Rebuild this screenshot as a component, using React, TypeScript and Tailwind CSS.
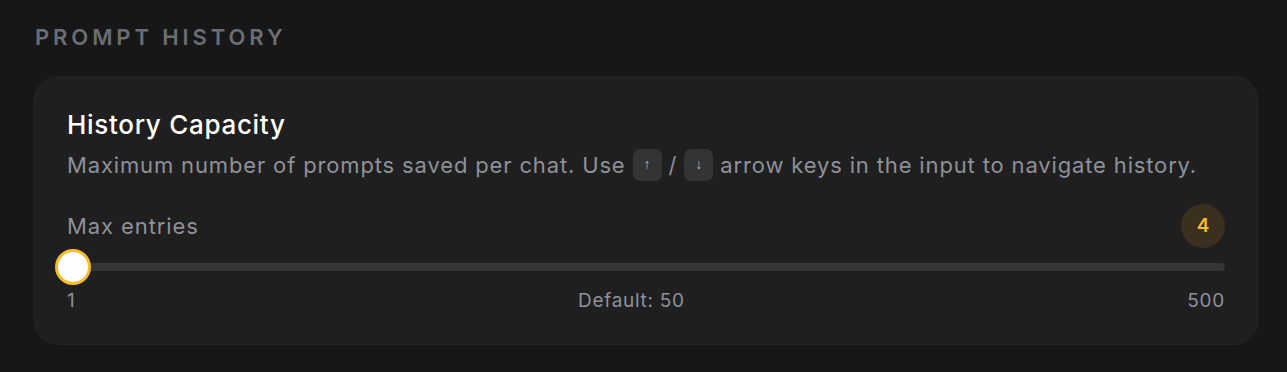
export default function App() {
  const value = 4;
  const min = 1;
  const max = 500;
  const pct = ((value - min) / (max - min)) * 100;

  return (
    <div
      className="min-h-[372px] w-full bg-[#171717] pl-[34px] pr-[29px] pt-[23px]"
      style={{ fontFamily: "Inter, 'Noto Sans', sans-serif" }}
    >
      <h2 className="text-[22px] font-semibold tracking-[3.9px] text-[#6b6d74] leading-[28px] pl-px">
        PROMPT HISTORY
      </h2>

      <div className="mt-[25px] rounded-[24px] bg-[#1f1f1f] border border-[#242424] px-[32px] pt-[32px] pb-[31px]">
        <div className="text-[26px] font-medium text-white leading-[32px] tracking-[0.7px]">
          History Capacity
        </div>
        <div className="mt-[8px] flex items-center text-[22px] text-[#8e919a] leading-[32px] tracking-[0.85px]">
          <span>Maximum number of prompts saved per chat. Use</span>
          <kbd className="mx-[7px] inline-flex h-[32px] w-[29px] items-center justify-center rounded-[7px] bg-[#343434] text-[14px] text-[#b7b9bf] tracking-normal">
            ↑
          </kbd>
          <span>/</span>
          <kbd className="mx-[7px] inline-flex h-[32px] w-[29px] items-center justify-center rounded-[7px] bg-[#343434] text-[14px] text-[#b7b9bf] tracking-normal">
            ↓
          </kbd>
          <span>arrow keys in the input to navigate history.</span>
        </div>

        <div className="mt-[23px] flex items-center justify-between">
          <span className="text-[22px] text-[#8e919a] leading-[32px] tracking-[0.9px]">Max entries</span>
          <span className="flex h-[44px] w-[44px] items-center justify-center rounded-full bg-[#3b2f20] text-[19px] font-semibold text-[#f7bb2c]">
            {value}
          </span>
        </div>

        <div className="relative mt-[15px] h-[8px] rounded-full bg-[#353535]">
          <div
            className="absolute top-1/2 h-[36px] w-[36px] -translate-y-1/2 rounded-full border-[3px] border-[#f7bb2c] bg-white"
            style={{ left: `calc(${pct}% - 19px)` }}
          />
        </div>

        <div className="mt-[18px] flex items-center justify-between text-[19px] text-[#8e919a] leading-[24px] tracking-[0.7px]">
          <span>1</span>
          <span>Default: 50</span>
          <span>500</span>
        </div>
      </div>
    </div>
  );
}
